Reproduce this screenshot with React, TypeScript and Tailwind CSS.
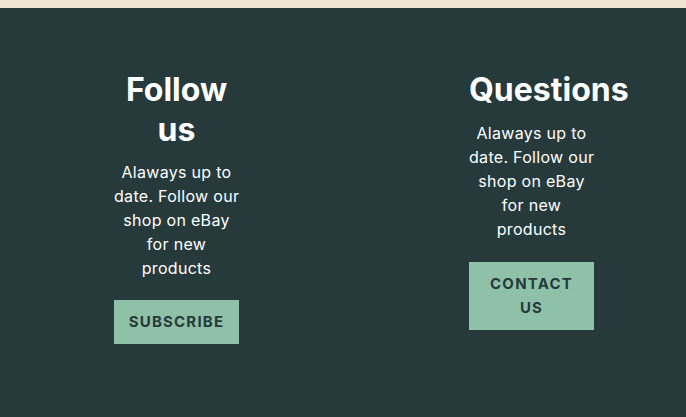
function Body() {
  return (
    <p className="text-[16px] leading-[24px] tracking-[0.3px] text-white whitespace-nowrap">
      Alaways up to
      <br />
      date. Follow our
      <br />
      shop on eBay
      <br />
      for new
      <br />
      products
    </p>
  );
}

export default function App() {
  const font = { fontFamily: "Inter, 'Noto Sans', sans-serif" };
  return (
    <div className="w-[686px] h-[417px] bg-[#263a3c] flex flex-col" style={font}>
      <div className="h-[8px] bg-[#ede5d2]" />
      <div className="flex pl-[114px] pt-[62px] gap-[230px]">
        <div className="w-[125px] flex flex-col items-stretch text-center">
          <h2 className="text-[32px] leading-[40px] font-bold text-white">Follow us</h2>
          <div className="mt-[10px]">
            <Body />
          </div>
          <button className="mt-[20px] bg-[#8fc1a9] text-[#263a3c] font-bold text-[15px] leading-[24px] tracking-[1.2px] py-[10px] px-[10px] uppercase">
            Subscribe
          </button>
        </div>
        <div className="w-[125px] flex flex-col items-stretch text-center">
          <h2 className="text-[32px] leading-[40px] font-bold text-white">Questions</h2>
          <div className="mt-[11px]">
            <Body />
          </div>
          <button className="mt-[21px] bg-[#8fc1a9] text-[#263a3c] font-bold text-[15px] leading-[24px] tracking-[1.2px] py-[10px] px-[10px] uppercase">
            Contact
            <br />
            us
          </button>
        </div>
      </div>
    </div>
  );
}
